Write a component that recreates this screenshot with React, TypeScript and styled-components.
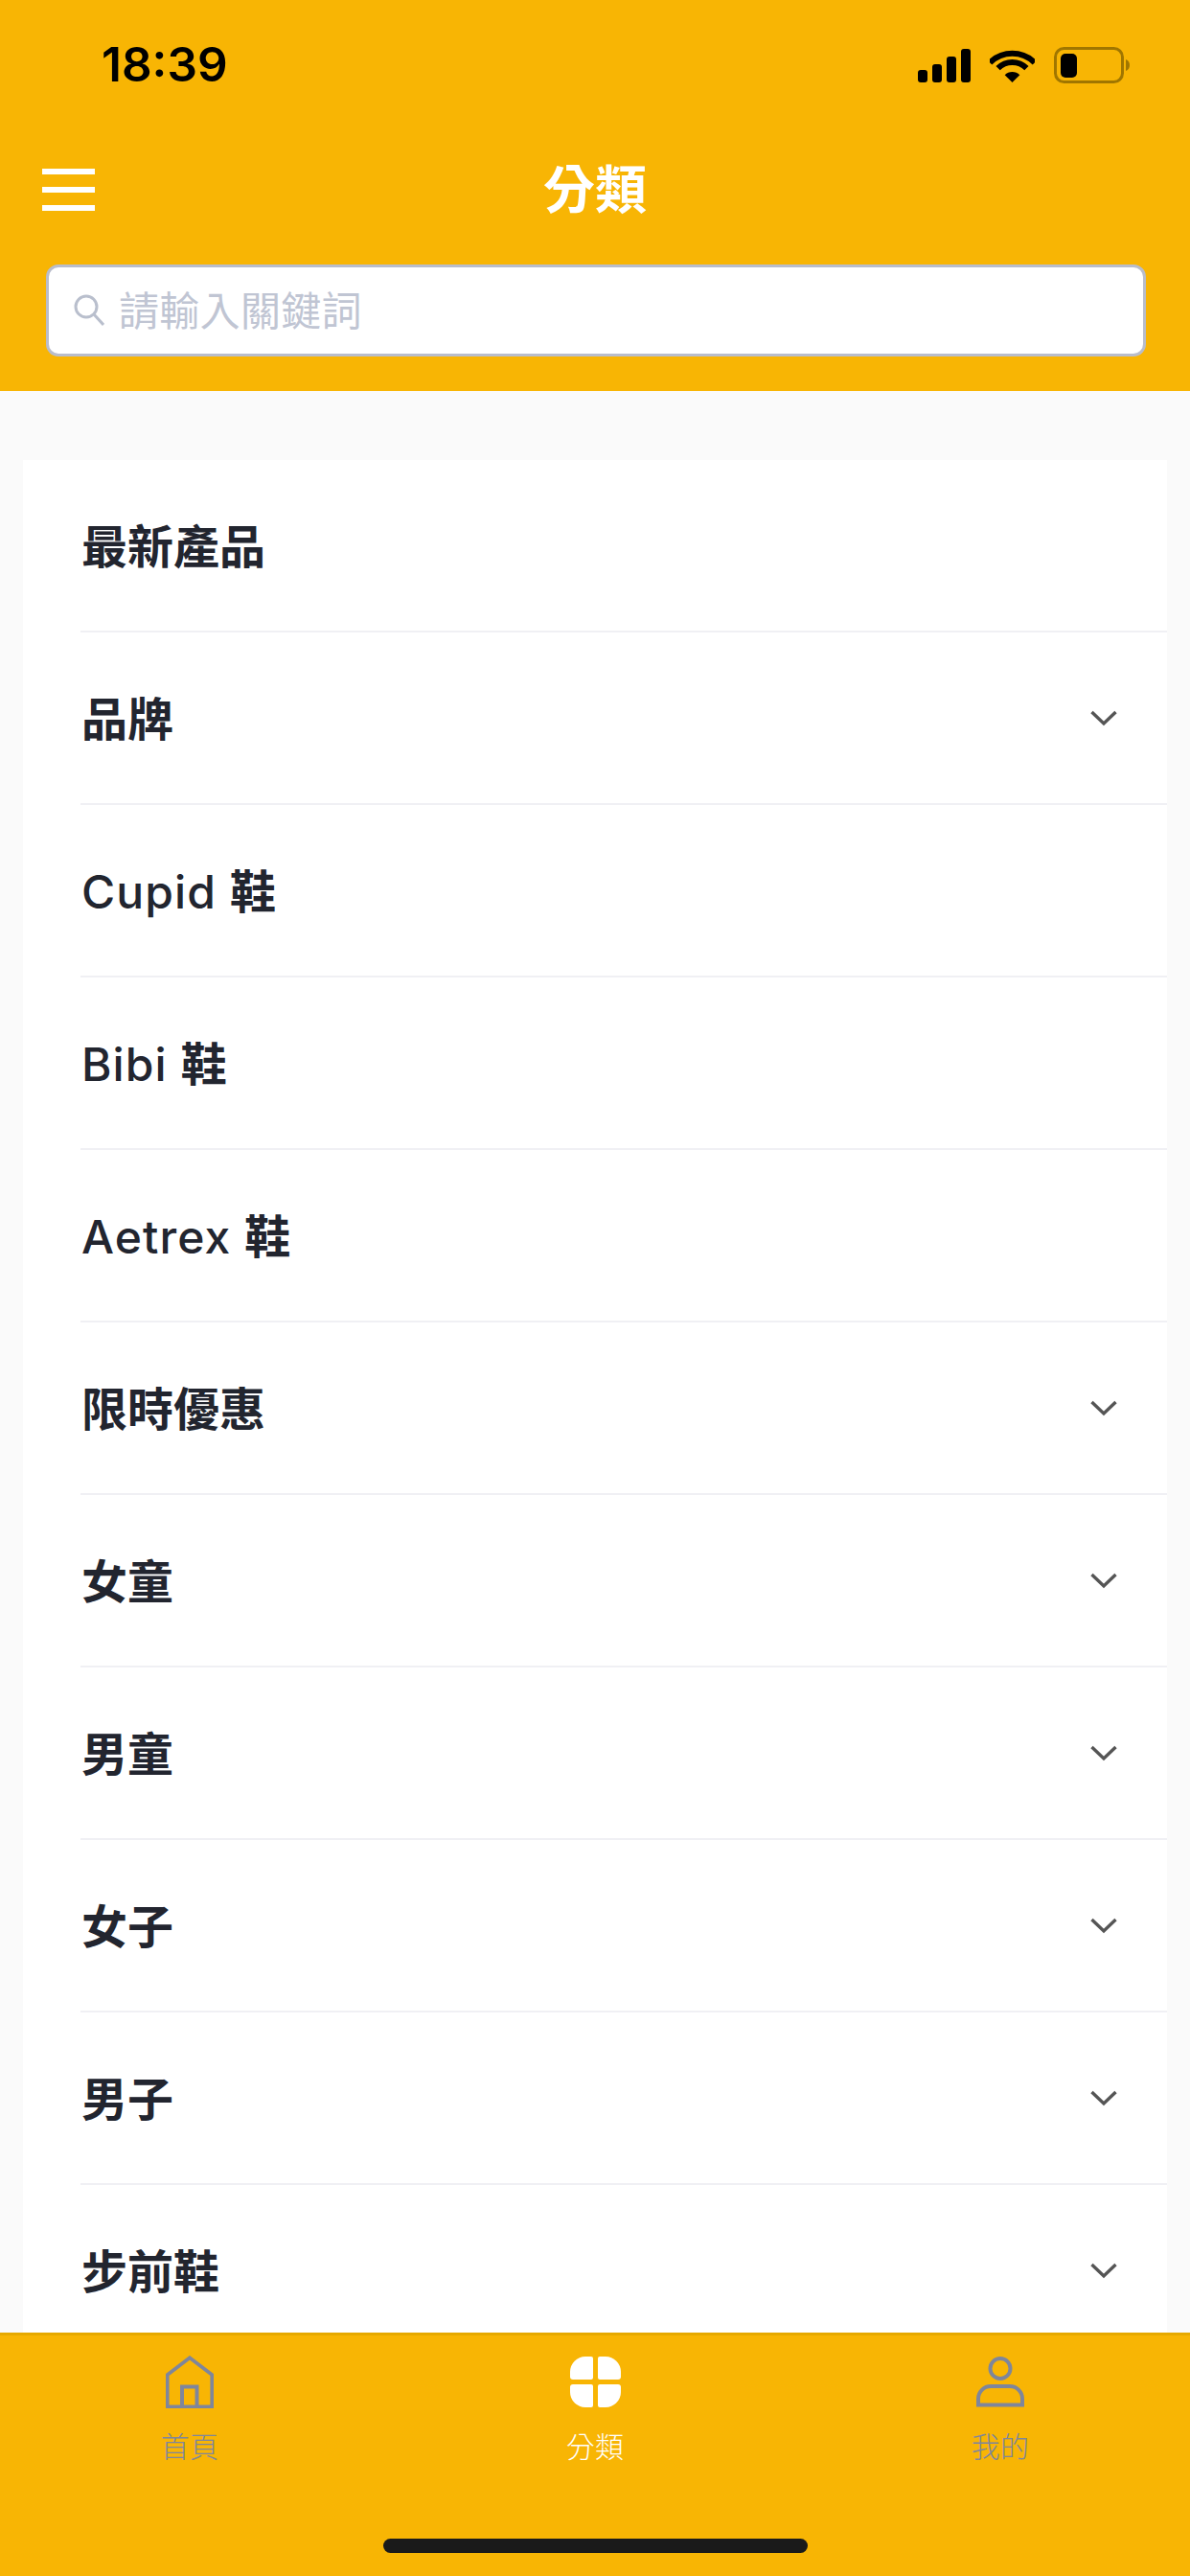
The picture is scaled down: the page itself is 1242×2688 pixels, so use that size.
import React from "react";
import styled, { createGlobalStyle } from "styled-components";

const FONT = `Inter, "Noto Sans CJK TC", "Noto Sans", sans-serif`;
const ORANGE = "#f8b504";
const MUTED = "#7f869b";

const Global = createGlobalStyle`
  html, body { margin: 0; padding: 0; background: #fafafa; }
  * { box-sizing: border-box; }
`;

const Screen = styled.div`
  width: 1242px;
  height: 2688px;
  display: flex;
  flex-direction: column;
  overflow: hidden;
  background: #fafafa;
  font-family: ${FONT};
`;

const Header = styled.header`
  flex: none;
  height: 408px;
  background: ${ORANGE};
  display: flex;
  flex-direction: column;
`;

const StatusBar = styled.div`
  height: 134px;
  display: flex;
  align-items: center;
  justify-content: space-between;
  padding: 2px 62px 0 106px;
`;

const Clock = styled.span`
  font-size: 49.5px;
  font-weight: 600;
  color: #000;
  margin-top: -2px;
`;

const StatusIcons = styled.div`
  display: flex;
  align-items: center;
  gap: 20px;
`;

const NavRow = styled.div`
  position: relative;
  height: 130px;
  display: flex;
  align-items: center;
  justify-content: center;
`;

const MenuButton = styled.div`
  position: absolute;
  left: 44px;
  top: 42px;
  width: 55px;
  display: flex;
  flex-direction: column;
  gap: 13px;
`;

const MenuBar = styled.span`
  display: block;
  height: 6px;
  background: #fff;
`;

const Title = styled.h1`
  margin: 0;
  font-size: 54px;
  line-height: 70px;
  font-weight: 700;
  color: #fff;
`;

const SearchBox = styled.label`
  margin: 12px 46px 0 48px;
  height: 96px;
  display: flex;
  align-items: center;
  gap: 15px;
  padding: 0 0 0 26px;
  background: #fff;
  border: 3px solid #b9bdcb;
  border-radius: 13px;
`;

const SearchInput = styled.input`
  flex: 1;
  min-width: 0;
  border: 0;
  outline: 0;
  padding: 0;
  background: transparent;
  font-family: ${FONT};
  font-size: 42px;
  letter-spacing: 0.3px;
  color: #22252f;
  &::placeholder { color: #c0c5d3; opacity: 1; }
`;

const List = styled.ul`
  flex: 1;
  min-height: 0;
  overflow: hidden;
  list-style: none;
  margin: 72px 24px 0;
  padding: 0 0 0 60px;
  background: #fff;
`;

const Row = styled.li`
  height: 180px;
  display: flex;
  align-items: center;
  justify-content: space-between;
  padding: 0 52px 0 1px;
  border-bottom: 2px solid #f0f0f4;
  font-size: 48px;
  font-weight: 600;
  color: #22252f;
`;

const RowLabel = styled.span`
  margin-top: -5px;
`;

const LatinName = styled.span`
  font-weight: 550;
  letter-spacing: 1.1px;
`;

const TabBar = styled.nav`
  flex: none;
  height: 254px;
  background: ${ORANGE};
  border-top: 3px solid #e6a900;
  position: relative;
  display: flex;
  justify-content: space-between;
  padding: 20px 138px 0;
`;

const Tab = styled.div<{ $active?: boolean }>`
  width: 120px;
  display: flex;
  flex-direction: column;
  align-items: center;
  color: ${(p) => (p.$active ? "#fff" : MUTED)};
`;

const TabIcon = styled.div`
  height: 56px;
  display: flex;
  align-items: center;
  justify-content: center;
`;

const TabLabel = styled.span`
  margin-top: 20px;
  font-size: 30px;
  line-height: 40px;
  font-weight: 300;
  letter-spacing: 0.3px;
`;

const HomeIndicator = styled.div`
  position: absolute;
  left: 400px;
  bottom: 24px;
  width: 443px;
  height: 15px;
  border-radius: 8px;
  background: #1a1a1a;
`;

const Signal = () => (
  <svg width="55" height="35" viewBox="0 0 55 35">
    <rect x="0" y="22" width="10" height="13" rx="3" />
    <rect x="15" y="16" width="10" height="19" rx="3" />
    <rect x="30" y="8" width="10" height="27" rx="3" />
    <rect x="45" y="0" width="10" height="35" rx="3" />
  </svg>
);

const Wifi = () => (
  <svg width="47" height="36" viewBox="0 0 47 36">
    <path d="M0.2 15.500A33 33 0 0 1 46.800 15.500" fill="none" stroke="#000" strokeWidth="6" />
    <path d="M8.600 21.100A21 21 0 0 1 38.400 21.100" fill="none" stroke="#000" strokeWidth="6" />
    <path d="M23.500 36L15.700 28.200A11 11 0 0 1 31.300 28.200Z" />
  </svg>
);

const Battery = () => (
  <svg width="80" height="38" viewBox="0 0 80 38">
    <rect x="1.500" y="1.500" width="70" height="35" rx="9" fill="none" stroke="#a07600" strokeWidth="3" />
    <rect x="7" y="7" width="17" height="25" rx="5" fill="#000" />
    <path d="M75 13C78 14 79 16.500 79 19C79 21.500 78 24 75 25Z" fill="#a07600" />
  </svg>
);

const SearchGlyph = () => (
  <svg width="32" height="34" viewBox="0 0 32 34" fill="none" stroke="#b9bfcd" strokeWidth="3">
    <circle cx="13" cy="13" r="11" />
    <path d="M21 21L31 32" />
  </svg>
);

const Chevron = () => (
  <svg width="28" height="17" viewBox="0 0 28 17" fill="none" stroke="#555" strokeWidth="3.400">
    <path d="M1.500 2L14 14L26.500 2" />
  </svg>
);

const HomeGlyph = () => (
  <svg width="50" height="55" viewBox="0 0 50 55" fill="none" stroke="currentColor" strokeWidth="3.600">
    <path d="M1.800 53.200V20L25 2.200L48.200 20V53.200Z" />
    <path d="M17 53V32.500H32.500V53" strokeWidth="4" />
  </svg>
);

const GridGlyph = () => (
  <svg width="53" height="53" viewBox="0 0 53 53" fill="currentColor">
    <path d="M24 2V22A2 2 0 0 1 22 24H3A3 3 0 0 1 0 21V16A16 16 0 0 1 16 0H22A2 2 0 0 1 24 2Z" />
    <path d="M29 2V22A2 2 0 0 0 31 24H50A3 3 0 0 0 53 21V16A16 16 0 0 0 37 0H31A2 2 0 0 0 29 2Z" />
    <path d="M24 51V31A2 2 0 0 0 22 29H3A3 3 0 0 0 0 32V37A16 16 0 0 0 16 53H22A2 2 0 0 0 24 51Z" />
    <path d="M29 51V31A2 2 0 0 1 31 29H50A3 3 0 0 1 53 32V37A16 16 0 0 1 37 53H31A2 2 0 0 1 29 51Z" />
  </svg>
);

const PersonGlyph = () => (
  <svg width="50" height="53" viewBox="0 0 50 53" fill="none" stroke="currentColor" strokeWidth="4">
    <circle cx="25" cy="12.500" r="10.500" />
    <path d="M2 50.500V44A13 13 0 0 1 15 31H35A13 13 0 0 1 48 44V50.500Z" />
  </svg>
);

const items: { label: string; latin?: string; expandable?: boolean }[] = [
  { label: "最新產品" },
  { label: "品牌", expandable: true },
  { latin: "Cupid", label: "鞋" },
  { latin: "Bibi", label: "鞋" },
  { latin: "Aetrex", label: "鞋" },
  { label: "限時優惠", expandable: true },
  { label: "女童", expandable: true },
  { label: "男童", expandable: true },
  { label: "女子", expandable: true },
  { label: "男子", expandable: true },
  { label: "步前鞋", expandable: true },
];

export default function App() {
  return (
    <>
      <Global />
      <Screen>
        <Header>
          <StatusBar>
            <Clock>18:39</Clock>
            <StatusIcons>
              <Signal />
              <Wifi />
              <Battery />
            </StatusIcons>
          </StatusBar>
          <NavRow>
            <MenuButton>
              <MenuBar />
              <MenuBar />
              <MenuBar />
            </MenuButton>
            <Title>分類</Title>
          </NavRow>
          <SearchBox>
            <SearchGlyph />
            <SearchInput placeholder="請輸入關鍵詞" />
          </SearchBox>
        </Header>
        <List>
          {items.map((item) => (
            <Row key={(item.latin ?? "") + item.label}>
              <RowLabel>
                {item.latin && <LatinName>{item.latin} </LatinName>}
                {item.label}
              </RowLabel>
              {item.expandable && <Chevron />}
            </Row>
          ))}
        </List>
        <TabBar>
          <Tab>
            <TabIcon><HomeGlyph /></TabIcon>
            <TabLabel>首頁</TabLabel>
          </Tab>
          <Tab $active>
            <TabIcon><GridGlyph /></TabIcon>
            <TabLabel>分類</TabLabel>
          </Tab>
          <Tab>
            <TabIcon><PersonGlyph /></TabIcon>
            <TabLabel>我的</TabLabel>
          </Tab>
          <HomeIndicator />
        </TabBar>
      </Screen>
    </>
  );
}
